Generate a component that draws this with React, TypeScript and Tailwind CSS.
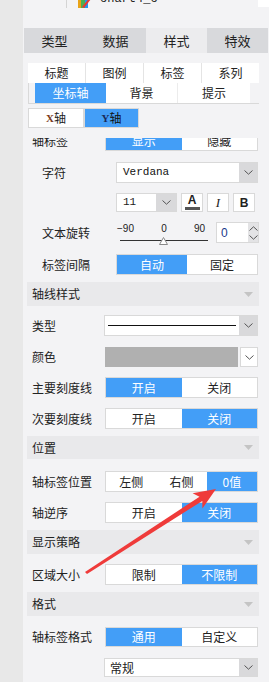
import React from "react";

const BLUE = "bg-[#439ef7] text-white";

const Toggle = ({ items, active, w = "w-[153px]" }: { items: string[]; active: number; w?: string }) => (
  <div className={`flex ${w} h-full border border-[#d9d9d9] bg-white`}>
    {items.map((t, i) => (
      <div
        key={t}
        className={`flex-1 flex items-center justify-center text-[12px] ${i === active ? BLUE : "text-[#222]"}`}
      >
        {t}
      </div>
    ))}
  </div>
);

const Chevron = ({ up = false }: { up?: boolean }) => (
  <svg width="9" height="5" viewBox="0 0 9 5" className={up ? "rotate-180" : ""}>
    <path d="M0.5 0.5 L4.5 4.2 L8.5 0.5" fill="none" stroke="#555" strokeWidth="1" />
  </svg>
);

const Row = ({ label, indent = false, h = "h-[21px]", mt, children }: { label: string; indent?: boolean; h?: string; mt: string; children: React.ReactNode }) => (
  <div className={`flex items-center ${h} ${mt}`}>
    <div className={`${indent ? "w-[89px] pl-[15px]" : "w-[78px] pl-[5px]"} shrink-0 text-[12px] text-[#222] whitespace-nowrap`}>
      {label}
    </div>
    <div className="h-full flex items-center">{children}</div>
  </div>
);

const Header = ({ title, mt, h = "h-[24px]" }: { title: string; mt: string; h?: string }) => (
  <div className={`flex items-center justify-between ${h} ${mt} bg-[#e9e9eb] pl-[5px] pr-[6px]`}>
    <span className="text-[12px] text-[#222]">{title}</span>
    <svg width="9" height="5" viewBox="0 0 9 5">
      <path d="M0 0 L9 0 L4.5 5 Z" fill="#c4c4c4" />
    </svg>
  </div>
);

const App = () => {
  return (
    <div className="relative flex w-[269px] h-[682px] overflow-hidden font-['Noto_Sans_CJK_SC','Liberation_Sans',sans-serif] text-[#222]">
      <div className="w-[23px] shrink-0 bg-[#e8e8e8]" />
      <div className="flex-1 flex flex-col bg-[#f3f3f5]">
        {/* tree item, scrolled off */}
        <div className="h-[28px] relative overflow-hidden">
          <div className="flex items-start h-[8px] overflow-hidden">
            <div className="ml-[43px] w-px h-[8px] bg-[#d4d4d4]" />
            <div className="ml-[11px] -mt-[6px]">
              <svg width="13" height="14" viewBox="0 0 13 14">
                <rect x="0" y="4" width="3" height="10" fill="#e8a317" />
                <rect x="3" y="1" width="4" height="13" fill="#4caf50" />
                <rect x="7" y="6" width="3" height="8" fill="#2196f3" />
                <path d="M4 13 L12 3 L13 5 L6 14 Z" fill="#e53935" />
              </svg>
            </div>
            <div className="ml-[9px] -mt-[9px] font-['Liberation_Mono',monospace] text-[12px] leading-[16px]">chart4_c</div>
            <div className="ml-auto w-[11px] h-[7px] bg-white" />
          </div>
        </div>

        {/* main tabs */}
        <div className="ml-px w-[244px] h-[25px] grid grid-cols-4 text-[13px]">
          <div className="bg-[#d8d9dc] flex items-center justify-center">类型</div>
          <div className="bg-[#d8d9dc] flex items-center justify-center">数据</div>
          <div className="bg-[#ececee] flex items-center justify-center">样式</div>
          <div className="bg-[#d8d9dc] flex items-center justify-center">特效</div>
        </div>

        {/* sub tabs */}
        <div className="ml-[5px] w-[231px] mt-[10px] text-[12px]">
          <div className="flex h-[20px] gap-px bg-[#e4e4e4]">
            {["标题", "图例", "标签", "系列"].map((t) => (
              <div key={t} className="flex-1 bg-white flex items-center justify-center">{t}</div>
            ))}
          </div>
          <div className="flex h-[21px] border-l border-b border-[#d9d9d9] pl-[6px]">
            <div className={`w-[71px] flex items-center justify-center ${BLUE}`}>坐标轴</div>
            <div className="w-[72px] bg-white flex items-center justify-center border-r border-[#ececec]">背景</div>
            <div className="w-[72px] bg-white flex items-center justify-center">提示</div>
          </div>
        </div>

        {/* X / Y */}
        <div className="ml-[5px] mt-[4px] flex h-[20px] text-[12px]">
          <div className="w-[56px] bg-white border border-[#d9d9d9] flex items-center justify-center">
            <span className="font-['Liberation_Serif',serif] font-bold text-[11px] text-[#7a3a1a]">X</span>轴
          </div>
          <div className={`w-[55px] border border-[#d9d9d9] flex items-center justify-center bg-[#439ef7]`}>
            <span className="font-['Liberation_Serif',serif] font-bold text-[11px] text-[#1a2a5a]">Y</span>
            <span className="text-[#111]">轴</span>
          </div>
        </div>

        {/* scroll area */}
        <div className="mt-[10px] flex-1 overflow-hidden ml-[4px] w-[232px]">
          <Row label="轴标签" mt="-mt-[8px]">
            <Toggle items={["显示", "隐藏"]} active={0} />
          </Row>

          <Row label="字符" indent mt="mt-[11px]">
            <div className="flex w-[142px] h-full border border-[#d9d9d9] bg-white">
              <div className="flex-1 flex items-center pl-[6px] font-['Liberation_Mono',monospace] text-[11px] text-[#111]">Verdana</div>
              <div className="w-[18px] bg-[#d9d9db] flex items-center justify-center"><Chevron /></div>
            </div>
          </Row>

          <div className="flex items-center h-[19px] mt-[10px] pl-[89px] gap-[4px]">
            <div className="flex w-[61px] h-full border border-[#d9d9d9] bg-white">
              <div className="flex-1 flex items-center pl-[6px] font-['Liberation_Mono',monospace] text-[11px]">11</div>
              <div className="w-[20px] bg-[#d9d9db] flex items-center justify-center"><Chevron /></div>
            </div>
            <div className="w-[22px] h-full border border-[#d9d9d9] bg-white flex flex-col items-center justify-center">
              <span className="font-['Liberation_Sans',sans-serif] font-bold text-[12px] leading-[11px]">A</span>
              <div className="w-[15px] h-[3px] bg-[#555] mt-px" />
            </div>
            <div className="w-[22px] h-full border border-[#d9d9d9] bg-white flex items-center justify-center font-['Liberation_Serif',serif] italic text-[13px]">I</div>
            <div className="w-[22px] h-full border border-[#d9d9d9] bg-white flex items-center justify-center font-['Liberation_Sans',sans-serif] font-bold text-[12px]">B</div>
          </div>

          <Row label="文本旋转" indent mt="mt-[10px]">
            <div className="w-[95px] h-full flex flex-col pt-[1px]">
              <div className="flex justify-between text-[10px] leading-[12px] font-['Liberation_Sans',sans-serif] pl-[1px] pr-[6px]">
                <span>−90</span>
                <span>0</span>
                <span>90</span>
              </div>
              <div className="relative mt-[2px] ml-[4px] w-[88px] h-[8px]">
                <div className="absolute left-0 right-0 top-[3px] h-px bg-[#333]" />
                <svg className="absolute left-[39px] top-0" width="9" height="8" viewBox="0 0 9 8">
                  <path d="M4.5 0.5 L8.5 7.5 L0.5 7.5 Z" fill="#fff" stroke="#888" strokeWidth="1" />
                </svg>
              </div>
            </div>
            <div className="ml-[5px] flex w-[43px] h-full border border-[#d9d9d9] bg-white">
              <div className="flex-1 flex items-center pl-[4px] font-['Liberation_Sans',sans-serif] text-[12px] text-[#1a3a8a]">0</div>
              <div className="w-[10px] bg-[#e3e3e5] flex flex-col items-center justify-center gap-[4px]">
                <Chevron up />
                <Chevron />
              </div>
            </div>
          </Row>

          <Row label="标签间隔" indent mt="mt-[11px]">
            <Toggle items={["自动", "固定"]} active={0} w="w-[142px]" />
          </Row>

          <Header title="轴线样式" mt="mt-[7px]" />

          <Row label="类型" mt="mt-[9px]">
            <div className="flex w-[154px] h-full border border-[#d9d9d9] bg-white -ml-px">
              <div className="flex-1 flex items-center px-[3px]">
                <div className="w-full h-px bg-[#111]" />
              </div>
              <div className="w-[18px] bg-[#d9d9db] flex items-center justify-center"><Chevron /></div>
            </div>
          </Row>

          <Row label="颜色" h="h-[20px]" mt="mt-[11px]">
            <div className="flex w-[153px] h-full gap-[2px]">
              <div className="flex-1 bg-[#b0b0b0]" />
              <div className="w-[18px] border border-[#d9d9d9] bg-white flex items-center justify-center"><Chevron /></div>
            </div>
          </Row>

          <Row label="主要刻度线" mt="mt-[10px]">
            <Toggle items={["开启", "关闭"]} active={0} />
          </Row>

          <Row label="次要刻度线" mt="mt-[10px]">
            <Toggle items={["开启", "关闭"]} active={1} />
          </Row>

          <Header title="位置" mt="mt-[7px]" h="h-[23px]" />

          <Row label="轴标签位置" mt="mt-[12px]">
            <Toggle items={["左侧", "右侧", "0值"]} active={2} />
          </Row>

          <Row label="轴逆序" mt="mt-[10px]">
            <Toggle items={["开启", "关闭"]} active={1} />
          </Row>

          <Header title="显示策略" mt="mt-[7px]" />

          <Row label="区域大小" mt="mt-[10px]">
            <Toggle items={["限制", "不限制"]} active={1} />
          </Row>

          <Header title="格式" mt="mt-[7px]" />

          <Row label="轴标签格式" h="h-[20px]" mt="mt-[11px]">
            <Toggle items={["通用", "自定义"]} active={0} />
          </Row>

          <Row label="" h="h-[19px]" mt="mt-[11px]">
            <div className="flex w-[154px] h-full border border-[#d9d9d9] bg-white -ml-px">
              <div className="flex-1 flex items-center pl-[5px] text-[12px]">常规</div>
              <div className="w-[18px] bg-[#d9d9db] flex items-center justify-center"><Chevron /></div>
            </div>
          </Row>
        </div>
      </div>

      {/* annotation arrow */}
      <svg className="absolute inset-0 pointer-events-none" width="269" height="682" viewBox="0 0 269 682">
        <polygon
          points="85,572 199.5,496.7 192.6,493.3 216,489 202.4,508.5 202.3,500.9 87,574"
          fill="#ef3b3a"
        />
      </svg>
    </div>
  );
};

export default App;
